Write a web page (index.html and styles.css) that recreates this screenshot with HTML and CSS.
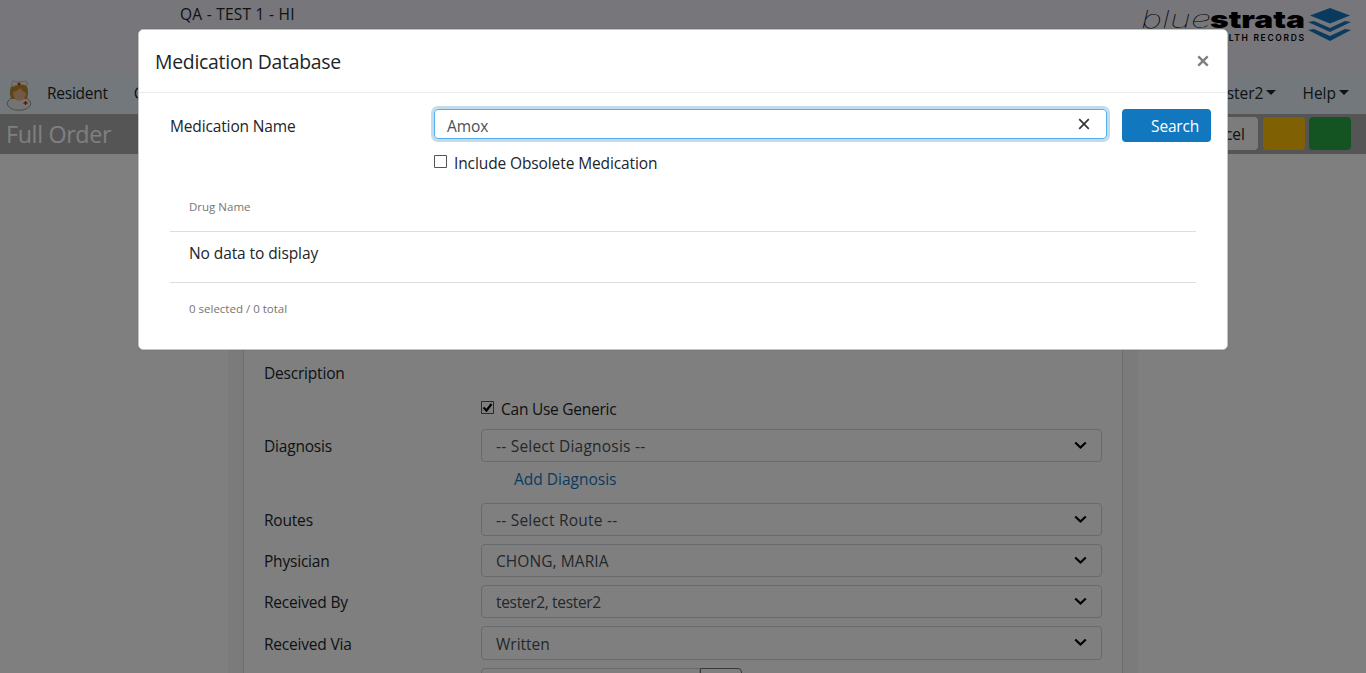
FILE: index.html
```html
<!DOCTYPE html>
<html lang="en">
<head>
<meta charset="utf-8">
<title>Full Order</title>
<link rel="stylesheet" href="styles.css">
</head>
<body>
<div class="page">
  <header class="top">
    <span class="facility">QA - TEST 1 - HI</span>
    <svg class="logo" width="214" height="42" viewBox="0 0 214 42">
      <text class="logo-blue" x="-1" y="27" textLength="70" lengthAdjust="spacingAndGlyphs">blue</text>
      <text class="logo-strata" x="68" y="27" textLength="95" lengthAdjust="spacingAndGlyphs">strata</text>
      <text class="logo-sub" x="64" y="40" textLength="98" lengthAdjust="spacing">HEALTH RECORDS</text>
      <g fill="#1475be">
        <path d="M188 7l20 7.5-20 8-20-8z"/>
        <path d="M166 21l6-1 16 7 15-7 6 1-21 10z"/>
        <path d="M166 29l6-1 16 7 15-7 6 1-21 11z"/>
      </g>
    </svg>
  </header>
  <nav class="nav">
    <svg class="nurse" width="26" height="32" viewBox="0 0 26 32">
      <ellipse cx="13" cy="23.5" rx="11.8" ry="6.8" fill="#e9e9e7" stroke="#999791"/>
      <path d="M5 19Q2 9 7 4q6-4 12 0 5 5 2 15z" fill="#bd8a28"/>
      <path d="M7 12q5-1 7-4 3 4 6 5 0 7-7 8-6-1-6-9z" fill="#e5b58e"/>
      <path d="M6 7q-1-4 1-6 6 2 13 0 2 2 1 5-7-3-15 1z" fill="#f1eee5" stroke="#c2ab80" stroke-width=".7"/>
      <path d="M13 2.500v3M11.500 4h3M19.500 21v4M17.500 23h4" stroke="#d21d25" stroke-width="1.300"/>
    </svg>
    <span class="nav-item resident">Resident</span>
    <span class="nav-item clipped">C</span>
    <span class="nav-item user">tester2<i class="caret"></i></span>
    <span class="nav-item help">Help<i class="caret"></i></span>
  </nav>
  <div class="titlebar">
    <h1>Full Order</h1>
    <div class="actions"><span class="btn cancel">Cancel</span><span class="btn yellow"></span><span class="btn green"></span></div>
  </div>
  <main class="container">
    <div class="card">
      <div class="row desc"><label>Description</label></div>
      <div class="row generic"><label></label><div class="check"><svg class="box" width="13" height="13" viewBox="0 0 13 13"><path d="M.5.5h12v12H.5z" fill="#fff" stroke="#555"/><path d="M2.5 6.500l3 3 5-6.500" fill="none" stroke="#000" stroke-width="2.2"/></svg><span class="t-generic">Can Use Generic</span></div></div>
      <div class="row"><label>Diagnosis</label><div class="select"><span class="placeholder">-- Select Diagnosis --</span><svg width="13" height="9" viewBox="0 0 13 9"><path d="M1.2 1.5l5.3 5 5.3-5"/></svg></div></div>
      <div class="row addrow"><label></label><a class="add">Add Diagnosis</a></div>
      <div class="row"><label>Routes</label><div class="select"><span class="placeholder">-- Select Route --</span><svg width="13" height="9" viewBox="0 0 13 9"><path d="M1.2 1.5l5.3 5 5.3-5"/></svg></div></div>
      <div class="row"><label>Physician</label><div class="select"><span class="t-chong">CHONG, MARIA</span><svg width="13" height="9" viewBox="0 0 13 9"><path d="M1.2 1.5l5.3 5 5.3-5"/></svg></div></div>
      <div class="row"><label>Received By</label><div class="select"><span class="t-tester">tester2, tester2</span><svg width="13" height="9" viewBox="0 0 13 9"><path d="M1.2 1.5l5.3 5 5.3-5"/></svg></div></div>
      <div class="row last"><label>Received Via</label><div class="select"><span>Written</span><svg width="13" height="9" viewBox="0 0 13 9"><path d="M1.2 1.5l5.3 5 5.3-5"/></svg></div></div>
      <div class="row"><label></label><div class="datefield"><span class="dateinput"></span><span class="datebtn"></span></div></div>
    </div>
  </main>
</div>
<div class="backdrop">
  <section class="modal">
    <div class="modal-head"><h2>Medication Database</h2><svg width="12" height="12" viewBox="0 0 12 12"><path d="M1.3 1.3l9.4 9.4M10.7 1.3l-9.4 9.4" stroke="#7f7f7f" stroke-width="2.4"/></svg></div>
    <div class="modal-body">
      <div class="search">
        <span class="search-label">Medication Name</span>
        <div class="input"><span class="amox">Amox</span><svg width="12" height="12" viewBox="0 0 12 12"><path d="M1.200 1.200l9.600 9.600M10.800 1.200l-9.600 9.600" stroke="#33363b" stroke-width="1.7"/></svg></div>
        <span class="search-btn">Search</span>
      </div>
      <div class="obsolete"><svg class="box" width="13" height="13" viewBox="0 0 13 13"><path d="M.5.5h12v12H.5z" fill="#fff" stroke="#555"/></svg><span class="t-obs">Include Obsolete Medication</span></div>
      <div class="table">
        <div class="th"><span>Drug Name</span></div>
        <div class="td"><span>No data to display</span></div>
        <div class="tf"><span>0 selected / 0 total</span></div>
      </div>
    </div>
  </section>
</div>
</body>
</html>
```
FILE: styles.css
```css
* { box-sizing: border-box; }
body { margin: 0; font: 15.5px/24px "Open Sans", "Noto Sans", sans-serif; color: #212529; overflow: hidden; }
.page { height: 673px; overflow: hidden; background: #fff; }
.top { height: 76px; background: #eeecf6; display: flex; justify-content: space-between; padding: 2px 15px 0 180px; }
.facility { font-size: 15.5px; letter-spacing: .25px; white-space: nowrap; }
.logo { margin-top: -1px; margin-right: -5px; overflow: visible; }
.logo-blue { font: italic 100 24.5px Inter, sans-serif; fill: #000; }
.logo-strata { font: 900 24px Inter, sans-serif; fill: #000; }
.logo-sub { font: 600 8.5px Inter, sans-serif; fill: #000; }
.nav { height: 38px; background: #e6f0fb; display: flex; align-items: center; padding: 0 17px 2px 6px; white-space: nowrap; }
.nurse { margin-top: 3px; }
.nav-item { margin-top: -2px; }
.resident { margin-left: 15px; letter-spacing: -.25px; }
.clipped { margin-left: 26px; }
.user { margin-left: auto; margin-right: 26px; }
.caret { display: inline-block; border: 5px solid transparent; border-top-color: #212529; border-bottom: 0; margin-left: 3px; vertical-align: 4px; }
.titlebar { height: 40px; background: #aaa; display: flex; align-items: center; justify-content: space-between; padding: 0 15px 0 6px; }
h1 { margin: -1px 0 0; font-size: 23.3px; font-weight: 400; letter-spacing: -.35px; color: #fff; }
.actions { display: flex; gap: 4px; margin-top: -1px; }
.btn { height: 33px; width: 42px; border-radius: 4px; }
.cancel { width: 75px; margin-right: 1px; background: #f8f9fa; line-height: 34px; padding-right: 13px; text-align: right; }
.yellow { background: #ffc107; }
.green { background: #28a745; }
.container { width: 910px; height: 600px; margin: 0 228px; background: #f7f7f7; padding: 0 15px; }
.card { height: 100%; background: #fff; border: solid #dfdfdf; border-width: 0 1px; padding: 207px 20px 0; }
.row { display: grid; grid-template-columns: 217px 621px; grid-template-rows: 100%; height: 33px; margin-bottom: 8px; line-height: 34px; white-space: nowrap; }
.row label { letter-spacing: -.2px; }
.row.desc { height: 24px; margin-bottom: 12px; line-height: 25px; }
.row.generic { height: 24px; margin-bottom: 8px; line-height: 25px; }
.check, .obsolete { display: flex; gap: 7px; }
.t-generic { letter-spacing: -.25px; }
.t-tester { letter-spacing: -.33px; }
.t-chong { letter-spacing: .08px; }
.placeholder { letter-spacing: .22px; }
.box { margin-top: 4px; }
.select { border: 1px solid #ced4da; border-radius: 4px; display: flex; justify-content: space-between; padding: 0 14px; color: #495057; line-height: 32px; }
.select svg { margin-top: 11px; fill: none; stroke: #000; stroke-width: 2.2; }
.addrow { margin-top: -8px; }
.add { padding-left: 33px; color: #1177be; line-height: 34px; }
.row.last { height: 34px; line-height: 36px; }
.last .select { line-height: 34px; }
.datefield { display: flex; }
.dateinput { width: 219px; border: 1px solid #ced4da; border-radius: 4px 0 0 4px; }
.datebtn { width: 42px; border: 1px solid #6c757d; border-radius: 0 4px 4px 0; }
.backdrop { position: absolute; inset: 0; background: rgba(0,0,0,.5); padding: 29px 0 0 138px; }
.modal { width: 1090px; height: 321px; background: #fff; border: 1px solid #c4c4c4; border-radius: 5px; box-shadow: 0 0 1px rgba(0,0,0,.4); white-space: nowrap; }
.modal-head { height: 63px; border-bottom: 1px solid #e9ecef; padding: 0 18px 0 16px; display: flex; align-items: center; justify-content: space-between; }
h2 { margin: 2px 0 0; font-size: 19.4px; font-weight: 400; letter-spacing: -.26px; }
.modal-body { padding: 16px 16px 0 31px; }
.search { display: flex; height: 33px; line-height: 35px; }
.search-label { width: 264px; letter-spacing: -.14px; }
.input { width: 673px; height: 30px; border: 1px solid #56b0ef; border-radius: 4px; box-shadow: 0 0 0 3px #c2dced; display: flex; justify-content: space-between; align-items: center; padding: 0 16px 0 12px; color: #495057; }
.amox { margin-top: 4px; letter-spacing: -.1px; }
.search-btn { margin-left: auto; width: 89px; height: 33px; border-radius: 4px; background: #1177be; color: #fff; padding-right: 12px; text-align: right; letter-spacing: -.2px; }
.obsolete { padding: 9px 0 0 264px; line-height: 24px; height: 35px; }
.t-obs { letter-spacing: -.11px; }
.table { width: 1026px; margin-top: 14px; }
.th, .tf { font-size: 11.5px; color: #757575; padding-left: 19px; }
.th { height: 41px; line-height: 32px; border-bottom: 1px solid #dedede; }
.td { height: 51px; padding-left: 19px; line-height: 43px; letter-spacing: -.09px; border-bottom: 1px solid #dedede; }
.tf { line-height: 51px; }
```
